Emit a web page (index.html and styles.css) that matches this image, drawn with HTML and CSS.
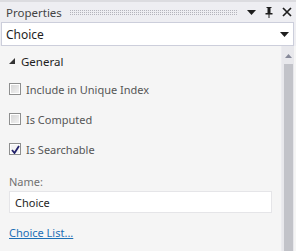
FILE: index.html
```html
<!DOCTYPE html>
<html lang="en">
<head>
    <meta charset="UTF-8">
    <title>Properties</title>
    <link rel="stylesheet" href="styles.css">
</head>
<body>
    <div class="panel">
        <div class="titlebar">
            <span class="title">Properties</span>
            <span class="grip"></span>
            <span class="tool-icons">
                <svg width="9" height="5" viewBox="0 0 9 5"><path d="M0 0h9L4.5 5z" fill="#1e1e1e"/></svg>
                <svg width="8" height="11" viewBox="0 0 8 11"><path d="M1.5 0h5v1h-1v5h2v1.5h-3v3.5h-1v-3.5h-3V6h2V1h-1z" fill="#1e1e1e"/></svg>
                <svg width="10" height="10" viewBox="0 0 10 10"><path d="M1 1l8 8M9 1l-8 8" stroke="#1e1e1e" stroke-width="1.7"/></svg>
            </span>
        </div>
        <div class="combo">
            <span>Choice</span>
            <svg width="9" height="5" viewBox="0 0 9 5"><path d="M0 0h9L4.5 5z" fill="#1e1e1e"/></svg>
        </div>
        <div class="body">
            <div class="props">
                <div class="group">
                    <svg width="6" height="6" viewBox="0 0 6 6"><path d="M6 0v6H0z" fill="#333"/></svg>
                    <span>General</span>
                </div>
                <label class="check"><span class="box"></span>Include in Unique Index</label>
                <label class="check"><span class="box"></span>Is Computed</label>
                <label class="check"><span class="box checked"><svg width="9" height="9" viewBox="0 0 9 9"><path d="M1 5l2.5 3L8 1" stroke="#22216a" stroke-width="1.8" fill="none"/></svg></span>Is Searchable</label>
                <div class="field-label">Name:</div>
                <div class="textbox">Choice</div>
                <a class="link" href="#">Choice List...</a>
            </div>
            <div class="scrollbar">
                <svg width="7" height="4" viewBox="0 0 7 4"><path d="M3.5 0L7 4H0z" fill="#868999"/></svg>
                <div class="thumb"></div>
            </div>
        </div>
    </div>
</body>
</html>
```

FILE: styles.css
```css
* {
    box-sizing: border-box;
    margin: 0;
    padding: 0;
}

body {
    font-family: 'Noto Sans', sans-serif;
    font-size: 11px;
    color: #1e1e1e;
    background-color: #eeeef2;
    width: 296px;
    height: 251px;
    overflow: hidden;
}

.panel {
    display: flex;
    flex-direction: column;
    height: 251px;
    border-top: 2px solid #dcdce0;
}

.titlebar {
    display: flex;
    align-items: center;
    height: 20px;
    padding: 0 4px 0 6px;
}

.title {
    color: #444444;
    font-size: 11.5px;
}

.grip {
    flex: 1;
    height: 5px;
    margin: 1px 10px 0 8px;
    background-image: radial-gradient(circle at 0.5px 0.5px, #b4b4bc 0.7px, transparent 0.8px);
    background-size: 2px 2px;
}

.tool-icons {
    display: flex;
    align-items: center;
    gap: 9px;
}

.combo {
    display: flex;
    align-items: center;
    justify-content: space-between;
    height: 24px;
    margin: 0 2px 0 1px;
    padding: 0 4px;
    font-size: 12px;
    background-color: #ffffff;
    border: 1px solid #cccedb;
}

.body {
    flex: 1;
    display: flex;
    background-color: #f5f5f5;
    min-height: 0;
}

.props {
    flex: 1;
    padding: 6px 9px 0 9px;
    border-right: 1px solid #ececf0;
}

.group {
    display: flex;
    align-items: center;
    gap: 6px;
    height: 18px;
    margin-bottom: 4px;
    font-size: 11.5px;
    color: #1e1e1e;
}

.check {
    display: flex;
    align-items: center;
    gap: 5px;
    height: 30px;
    color: #555555;
}

.box {
    display: flex;
    align-items: center;
    justify-content: center;
    width: 12px;
    height: 12px;
    border: 1px solid #8e8f8f;
    background: linear-gradient(135deg, #d4d4d4, #f4f4f4);
    box-shadow: inset 0 0 0 1px #ffffff;
}

.box.checked {
    background: #f4f4f4;
}

.field-label {
    margin-top: 10px;
    color: #717171;
}

.textbox {
    height: 22px;
    margin: 2px 0 0 0;
    padding: 3px 5px;
    background-color: #ffffff;
    border: 1px solid #e5e5e8;
    width: 263px;
}

.link {
    display: inline-block;
    margin-top: 12px;
    color: #1c6fb5;
}

.scrollbar {
    width: 17px;
    display: flex;
    flex-direction: column;
    align-items: center;
    padding-top: 8px;
    background-color: #e8e8ec;
    margin-right: 2px;
}

.thumb {
    flex: 1;
    width: 9px;
    margin-top: 6px;
    background-color: #c2c3c9;
}
```
